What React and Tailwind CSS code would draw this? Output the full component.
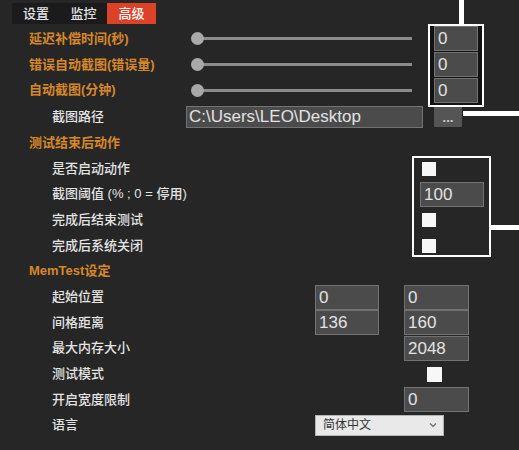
import React from "react";

const cjk = "font-['Liberation_Sans','Noto_Sans_CJK_SC',sans-serif]";
const num = "font-['Liberation_Sans',Arial,sans-serif]";

function Orange({ children }) {
  return (
    <div className={`pl-[29px] text-[13px] leading-[16px] font-bold text-[#d68729] whitespace-nowrap ${cjk}`}>
      {children}
    </div>
  );
}

function Label({ w, children }) {
  return (
    <div
      className={`shrink-0 pl-[52px] text-[13px] leading-[16px] font-medium text-[#e4e4e4] whitespace-nowrap ${cjk}`}
      style={{ width: w }}
    >
      {children}
    </div>
  );
}

function Input({ w, value, className = "" }) {
  return (
    <div
      className={`relative z-10 shrink-0 h-[25px] flex items-center pl-[3px] bg-[#4b4b4b] border border-[#727272] text-[17px] leading-none text-[#e2e2e2] ${num} ${className}`}
      style={{ width: w }}
    >
      {value}
    </div>
  );
}

function Check({ className = "" }) {
  return <div className={`shrink-0 w-[14px] h-[14px] bg-[#f7f7f7] ${className}`} />;
}

function Slider() {
  return (
    <div className="relative shrink-0 w-[221px] h-[13px] flex items-center">
      <div className="ml-[6px] h-[3px] flex-1 bg-[#8c8c8c]" />
      <div className="absolute left-0 top-0 w-[13px] h-[13px] rounded-full bg-[#a9a9a9]" />
    </div>
  );
}

function Row({ children, h = "h-[25.7px]" }) {
  return <div className={`flex items-center ${h}`}>{children}</div>;
}

export default function App() {
  return (
    <div className="relative w-[519px] h-[450px] overflow-hidden bg-[#262626]">
      {/* tabs */}
      <div className="ml-[12px] mt-[3px] flex h-[21px] w-[144px] bg-[#1b1b1b]">
        <div className={`w-[48px] flex items-center justify-center text-[13px] text-[#e6e6e6] font-medium ${cjk}`}>设置</div>
        <div className={`w-[47px] flex items-center justify-center text-[13px] text-[#e6e6e6] font-medium ${cjk}`}>监控</div>
        <div className={`w-[49px] flex items-center justify-center text-[13px] text-white font-medium bg-[#dc4227] ${cjk}`}>高级</div>
      </div>

      <div className="mt-[2px]">
        <Row>
          <div className="w-[191px] shrink-0"><Orange>延迟补偿时间(秒)</Orange></div>
          <Slider />
          <Input w={44} value="0" className="ml-[22px]" />
        </Row>
        <Row>
          <div className="w-[191px] shrink-0"><Orange>错误自动截图(错误量)</Orange></div>
          <Slider />
          <Input w={44} value="0" className="ml-[22px]" />
        </Row>
        <Row>
          <div className="w-[191px] shrink-0"><Orange>自动截图(分钟)</Orange></div>
          <Slider />
          <Input w={44} value="0" className="ml-[22px]" />
        </Row>
        <Row h="h-[27px]">
          <Label w={186}>截图路径</Label>
          <div className={`shrink-0 w-[237px] h-[22px] flex items-center pl-[2px] bg-[#4b4b4b] border border-[#727272] text-[17px] leading-none text-[#e2e2e2] ${num}`}>
            C:\Users\LEO\Desktop
          </div>
          <div className={`shrink-0 ml-[11px] w-[28px] h-[21px] flex items-end justify-center pb-[3px] bg-[#555555] text-[13px] leading-none font-bold text-[#cfcfcf] ${num}`}>
            ...
          </div>
        </Row>

        <Row><Orange>测试结束后动作</Orange></Row>
        <Row>
          <Label w={422}>是否启动动作</Label>
          <Check />
        </Row>
        <Row>
          <Label w={420}>截图阈值 (% ; 0 = 停用)</Label>
          <Input w={64} value="100" />
        </Row>
        <Row>
          <Label w={422}>完成后结束测试</Label>
          <Check />
        </Row>
        <Row>
          <Label w={422}>完成后系统关闭</Label>
          <Check />
        </Row>

        <Row><Orange>MemTest设定</Orange></Row>
        <Row>
          <Label w={315}>起始位置</Label>
          <Input w={64} value="0" />
          <Input w={65} value="0" className="ml-[25px]" />
        </Row>
        <Row>
          <Label w={315}>间格距离</Label>
          <Input w={64} value="136" />
          <Input w={65} value="160" className="ml-[25px]" />
        </Row>
        <Row>
          <Label w={404}>最大内存大小</Label>
          <Input w={65} value="2048" />
        </Row>
        <Row>
          <Label w={427}>测试模式</Label>
          <Check className="w-[15px] h-[15px]" />
        </Row>
        <Row>
          <Label w={404}>开启宽度限制</Label>
          <Input w={65} value="0" />
        </Row>
        <Row>
          <Label w={315}>语言</Label>
          <div className={`shrink-0 w-[129px] h-[21px] flex items-center justify-between pl-[7px] pr-[6px] bg-[#e9e9e9] border border-[#b5b5b5] text-[12px] text-[#333333] ${cjk}`}>
            <span>简体中文</span>
            <svg width="8" height="6" viewBox="0 0 8 6" fill="none">
              <path d="M1 1.5 L4 4.5 L7 1.5" stroke="#666" strokeWidth="1.2" />
            </svg>
          </div>
        </Row>
      </div>

      {/* annotation overlays */}
      <div className="absolute left-[459px] top-0 w-[5px] h-[25px] bg-white" />
      <div className="absolute left-[428px] top-[24px] w-[56px] h-[83px] border-2 border-white bg-[#121212]" />
      <div className="absolute left-[463px] top-[111px] w-[56px] h-[5px] bg-white" />

      <div className="absolute left-[412px] top-[156px] w-[79px] h-[101px] border-2 border-white" />
      <div className="absolute left-[490px] top-[225px] w-[29px] h-[5px] bg-white" />
    </div>
  );
}
